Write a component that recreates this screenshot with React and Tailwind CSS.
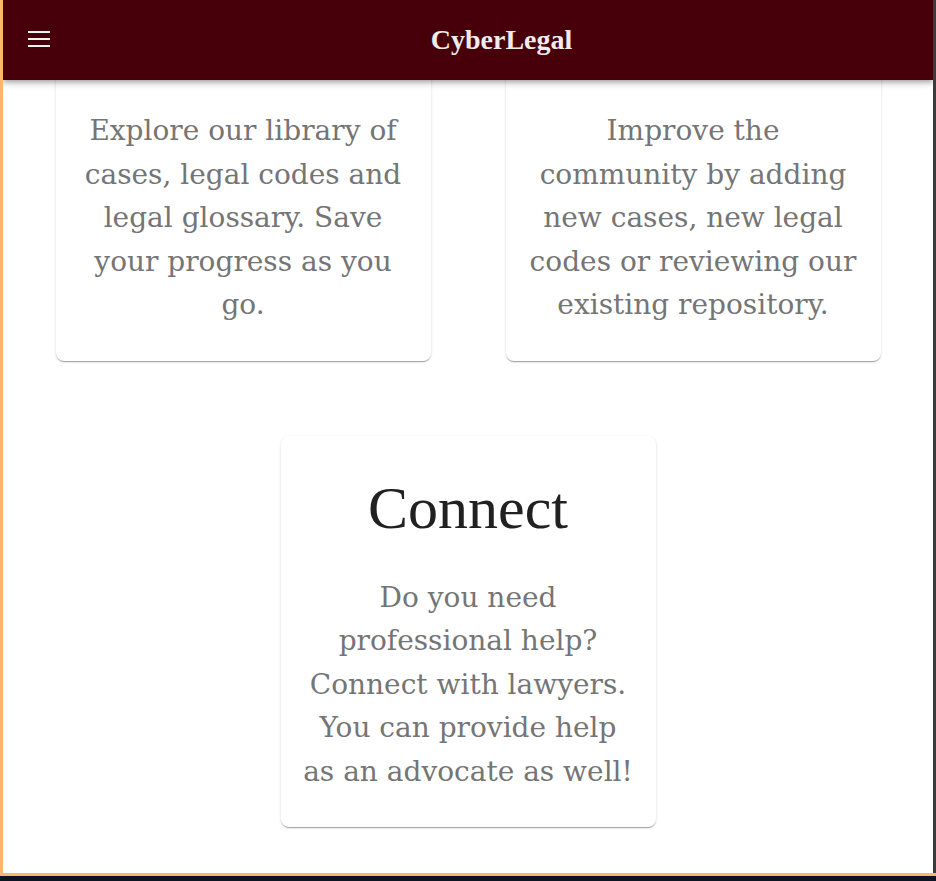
import React from "react";

const cardShadow =
	"shadow-[0_2px_1px_-1px_rgba(0,0,0,0.2),0_1px_1px_0_rgba(0,0,0,0.14),0_1px_3px_0_rgba(0,0,0,0.12)]";

function FeatureCard({ title, lines }) {
	return (
		<div className={`w-[375px] bg-white rounded-lg ${cardShadow} pt-[36px] pb-[34px] px-[16px] text-center`}>
			<h2 className="text-[60px] leading-[72px] text-[#212121] font-['Liberation_Serif',serif]">
				{title}
			</h2>
			<p className="mt-[32px] text-[28px] leading-[43.5px] text-[#757575] font-['DejaVu_Serif',serif]">
				{lines.map((line, i) => (
					<React.Fragment key={i}>
						{line}
						{i < lines.length - 1 && <br />}
					</React.Fragment>
				))}
			</p>
		</div>
	);
}

function App() {
	return (
		<div className="w-[936px] h-[881px] overflow-hidden bg-[#0c1424]">
			{/* window frame */}
			<div className="h-[876px] bg-[#fdb76b] pl-[3px] pb-[3px] flex">
				<div className="relative flex-1 bg-white overflow-hidden">
					{/* App bar, sits over the scrolled content */}
					<header className="absolute top-0 left-0 right-0 z-10 h-[80px] bg-[#470009] flex items-center shadow-[0_2px_4px_-1px_rgba(0,0,0,0.2),0_4px_5px_0_rgba(0,0,0,0.14),0_1px_10px_0_rgba(0,0,0,0.12)]">
						<div className="w-[67px] h-full flex items-center pl-[25px]">
							<div className="flex flex-col gap-[5px] mt-[-2px]">
								<span className="block w-[22px] h-[2px] bg-[#f2f2f2]"></span>
								<span className="block w-[22px] h-[2px] bg-[#f2f2f2]"></span>
								<span className="block w-[22px] h-[2px] bg-[#f2f2f2]"></span>
							</div>
						</div>
						<h1 className="flex-1 text-center text-[28px] font-bold text-[#f0ecec] font-['Liberation_Serif',serif] mt-[-1px]">
							CyberLegal
						</h1>
					</header>

					{/* page content, scrolled a little */}
					<main className="mt-[-31px]">
						<div className="grid grid-cols-2 px-[15px]">
							<div className="flex justify-center">
								<FeatureCard
									title="Learn"
									lines={[
										"Explore our library of",
										"cases, legal codes and",
										"legal glossary. Save",
										"your progress as you",
										"go.",
									]}
								/>
							</div>
							<div className="flex justify-center">
								<FeatureCard
									title="Contribute"
									lines={[
										"Improve the",
										"community by adding",
										"new cases, new legal",
										"codes or reviewing our",
										"existing repository.",
									]}
								/>
							</div>
						</div>
						<div className="flex justify-center mt-[75px]">
							<FeatureCard
								title="Connect"
								lines={[
									"Do you need",
									"professional help?",
									"Connect with lawyers.",
									"You can provide help",
									"as an advocate as well!",
								]}
							/>
						</div>
					</main>
				</div>
				<div className="w-[3px] bg-[#3b3b3b]"></div>
			</div>
		</div>
	);
}

export default App;
